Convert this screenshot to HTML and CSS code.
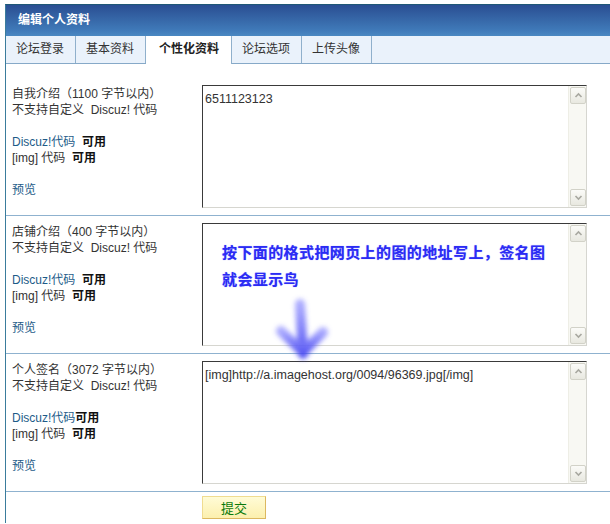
FILE: index.html
```html
<!DOCTYPE html>
<html lang="zh-CN">
<head>
  <meta charset="UTF-8" />
  <title>编辑个人资料</title>
  <link rel="stylesheet" href="styles.css">
</head>
<body>
  <div class="panel">
    <div class="panel-title">编辑个人资料</div>

    <ul class="tabs">
      <li>论坛登录</li>
      <li>基本资料</li>
      <li class="current">个性化资料</li>
      <li>论坛选项</li>
      <li>上传头像</li>
    </ul>

    <form class="profile-form">
      <div class="field-row first">
        <div class="field-label">
          自我介绍（1100 字节以内）<br>
          不支持自定义&nbsp; Discuz! 代码<br><br>
          <a href="#">Discuz!代码</a>&nbsp; <b>可用</b><br>
          [img] 代码&nbsp; <b>可用</b><br><br>
          <a href="#">预览</a>
        </div>
        <div class="editor">
          <textarea name="bio">6511123123</textarea>
          <div class="scrollbar">
            <span class="scroll-btn"><svg width="15" height="15" viewBox="0 0 15 15"><polyline points="4.5,9 7.5,6 10.5,9" /></svg></span>
            <span class="scroll-btn"><svg width="15" height="15" viewBox="0 0 15 15"><polyline points="4.5,6 7.5,9 10.5,6" /></svg></span>
          </div>
        </div>
      </div>

      <div class="field-row">
        <div class="field-label">
          店铺介绍（400 字节以内）<br>
          不支持自定义&nbsp; Discuz! 代码<br><br>
          <a href="#">Discuz!代码</a>&nbsp; <b>可用</b><br>
          [img] 代码&nbsp; <b>可用</b><br><br>
          <a href="#">预览</a>
        </div>
        <div class="editor">
          <textarea name="shop"></textarea>
          <div class="scrollbar">
            <span class="scroll-btn"><svg width="15" height="15" viewBox="0 0 15 15"><polyline points="4.5,9 7.5,6 10.5,9" /></svg></span>
            <span class="scroll-btn"><svg width="15" height="15" viewBox="0 0 15 15"><polyline points="4.5,6 7.5,9 10.5,6" /></svg></span>
          </div>
          <div class="note">按下面的格式把网页上的图的地址写上，签名图<br>就会显示鸟</div>
        </div>
      </div>

      <div class="field-row">
        <div class="field-label">
          个人签名（3072 字节以内）<br>
          不支持自定义&nbsp; Discuz! 代码<br><br>
          <a href="#">Discuz!代码</a><b>可用</b><br>
          [img] 代码&nbsp; <b>可用</b><br><br>
          <a href="#">预览</a>
        </div>
        <div class="editor">
          <textarea name="signature">[img]http://a.imagehost.org/0094/96369.jpg[/img]</textarea>
          <div class="scrollbar">
            <span class="scroll-btn"><svg width="15" height="15" viewBox="0 0 15 15"><polyline points="4.5,9 7.5,6 10.5,9" /></svg></span>
            <span class="scroll-btn"><svg width="15" height="15" viewBox="0 0 15 15"><polyline points="4.5,6 7.5,9 10.5,6" /></svg></span>
          </div>
        </div>
      </div>

      <div class="submit-row">
        <button type="submit" class="btn-submit">提交</button>
      </div>

      <svg class="hint-arrow" width="70" height="80" viewBox="0 0 70 80">
        <defs>
          <linearGradient id="arrowFill" x1="0" y1="0" x2="0" y2="1">
            <stop offset="0" stop-color="#a4a4ff" />
            <stop offset="1" stop-color="#4646f2" />
          </linearGradient>
          <filter id="soft" x="-30%" y="-30%" width="160%" height="160%">
            <feGaussianBlur stdDeviation="2.4" />
          </filter>
        </defs>
        <g fill="none" stroke="url(#arrowFill)" stroke-width="10" stroke-linecap="round" stroke-linejoin="round" filter="url(#soft)" opacity="0.9">
          <path d="M33 12 L36 62" />
          <path d="M14 39 L36 60 L56 40" />
        </g>
      </svg>
    </form>
  </div>
</body>
</html>
```

FILE: styles.css
```css
body {
  margin: 0;
  background: #fff;
  font-family: "Liberation Sans", "Noto Sans CJK SC", sans-serif;
  font-size: 12px;
  color: #333;
  overflow: hidden;
}

.panel {
  margin: 4px 0 0 5px;
  border-top: 1px solid #1f5877;
  border-left: 1px solid #3a7c9c;
  min-height: calc(100vh - 5px);
  box-sizing: border-box;
}

.panel-title {
  height: 31px;
  line-height: 31px;
  padding-left: 12px;
  background: linear-gradient(#2a4e92, #3f79b8 80%, #4a88c2);
  color: #fff;
  font-weight: bold;
}

.tabs {
  display: flex;
  margin: 0;
  padding: 0;
  list-style: none;
  background: #eaf2fb;
  border-bottom: 1px solid #86a9c8;
  height: 27px;
}

.tabs li {
  padding: 0 11px 0 10px;
  line-height: 27px;
  border-right: 1px solid #8fb0cc;
  color: #333;
}

.tabs li.current {
  padding: 0 12px 0 13px;
  background: #fff;
  font-weight: bold;
  color: #222;
  height: 28px;
}

.profile-form {
  position: relative;
  margin: 0;
}

.field-row {
  display: flex;
  padding: 7px 0 7px;
  border-bottom: 1px solid #8fb2cf;
}

.field-row.first {
  padding-top: 21px;
}

.field-label {
  width: 190px;
  padding: 1px 0 0 6px;
  line-height: 16px;
}

.field-label a {
  color: #1d5b88;
  text-decoration: none;
}

.field-label b {
  color: #111;
}

.editor {
  position: relative;
  display: flex;
  width: 383px;
  height: 121px;
  border: 1px solid;
  border-color: #3a3a3a #d6d6d0 #d6d6d0 #3a3a3a;
  background: #fff;
}

.editor textarea {
  flex: 1;
  border: none;
  outline: none;
  resize: none;
  margin: 0;
  padding: 5px 2px 4px;
  font-family: "Liberation Sans", "Noto Sans CJK SC", sans-serif;
  font-size: 12.5px;
  line-height: 16px;
  color: #333;
  background: transparent;
  overflow: hidden;
}

.scrollbar {
  display: flex;
  flex-direction: column;
  justify-content: space-between;
  width: 16px;
  padding: 1px 0 1px 1px;
  background: #f8f8f3;
  border-left: 1px solid #eeeee6;
}

.scroll-btn {
  display: block;
  width: 14px;
  height: 15px;
  border: 1px solid #d2d2c8;
  border-radius: 2px;
  background: linear-gradient(#fbfbf8, #e8e8e0);
}

.scroll-btn svg {
  display: block;
}

.scroll-btn polyline {
  fill: none;
  stroke: #a8a8a0;
  stroke-width: 1.6;
}

.note {
  position: absolute;
  left: 19px;
  top: 14px;
  font-family: "Noto Sans CJK SC", sans-serif;
  font-size: 15px;
  font-weight: bold;
  line-height: 27px;
  letter-spacing: 0.4px;
  color: #2b2bf4;
  text-shadow: 0 0 1px #8a8aff;
}

.submit-row {
  padding: 4px 0 0 196px;
}

.btn-submit {
  width: 64px;
  height: 23px;
  padding: 0;
  border: 1px solid;
  border-color: #f0dc90 #dcb860 #dcb860 #f0dc90;
  background: linear-gradient(#fffbd6, #fcf0ae);
  color: #0a7a0a;
  font-family: "Noto Sans CJK SC", sans-serif;
  font-size: 13px;
  cursor: pointer;
}

.hint-arrow {
  position: absolute;
  left: 261px;
  top: 228px;
  pointer-events: none;
}
```
